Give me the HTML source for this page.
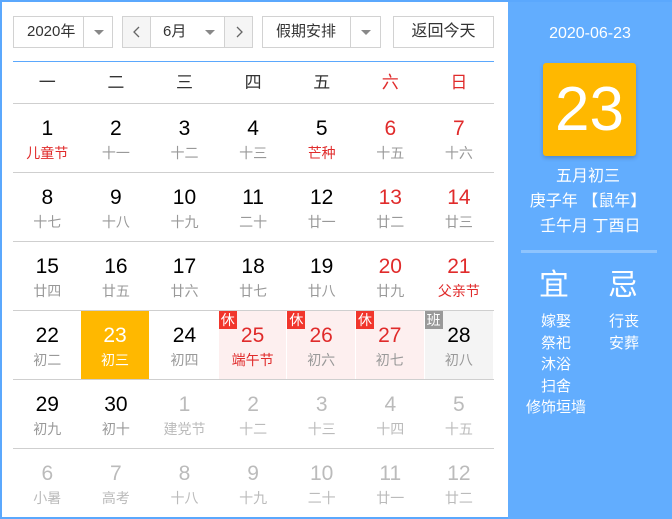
<!DOCTYPE html><html><head><meta charset="utf-8"><style>
*{margin:0;padding:0;box-sizing:border-box}
body{width:672px;height:519px;background:#fff;font-family:"Liberation Sans","Noto Sans CJK SC",sans-serif;position:relative;overflow:hidden}
.frame{position:absolute;left:0;top:0;width:672px;height:519px;border:2px solid #5ba8fd;border-right:none}
.box{position:absolute;top:16px;height:32px;border:1px solid #d2d2d2;font-size:15px;color:#333;line-height:30px}
.tri{position:absolute;width:0;height:0;border-left:5px solid transparent;border-right:5px solid transparent;border-top:5px solid #888;top:13px}
.hline{position:absolute;left:13px;width:481px;height:1px;background:#cfcfcf}
.wk{position:absolute;top:62px;height:41px;line-height:41px;width:68.6px;text-align:center;font-size:17px;color:#333}
.c{position:absolute;width:68.6px;height:68px;text-align:center}
.c .n{position:absolute;top:13px;left:0;right:0;font-size:21px;color:#000;line-height:24px}
.c .l{position:absolute;top:40px;left:0;right:0;font-size:14px;color:#999;line-height:18px}
.red .n{color:#e02b2b}.fes{color:#e02b2b!important}
.g .n,.g .l{color:#bbb}
.hol{background:#fdefef}
.tag{position:absolute;left:0;top:0;width:18px;height:18px;background:#f1362c;color:#fff;font-size:14px;line-height:18px;text-align:center}
.right{position:absolute;left:508px;top:2px;width:164px;height:517px;background:#62adfe;color:#fff;text-align:center}
.arr{position:absolute;top:0;width:28px;height:30px;background:#f5f5f5}
</style></head><body>
<div class="frame"></div>
<div class="box" style="left:13px;width:100px"><span style="position:absolute;left:13px">2020年</span><div style="position:absolute;left:69px;top:0;bottom:0;border-left:1px solid #d2d2d2;width:30px"><div class="tri" style="left:10px"></div></div></div>
<div class="box" style="left:122px;width:131px">
<div class="arr" style="left:0;border-right:1px solid #d2d2d2"><svg width="28" height="30"><path d="M16 10 L11 15 L16 20" fill="none" stroke="#666" stroke-width="1.3"/></svg></div>
<span style="position:absolute;left:40px">6月</span><div class="tri" style="left:82px"></div>
<div class="arr" style="right:0;border-left:1px solid #d2d2d2"><svg width="28" height="30"><path d="M12 10 L17 15 L12 20" fill="none" stroke="#666" stroke-width="1.3"/></svg></div></div>
<div class="box" style="left:262px;width:119px"><span style="position:absolute;left:13px">假期安排</span><div style="position:absolute;left:87px;top:0;bottom:0;border-left:1px solid #d2d2d2;width:31px"><div class="tri" style="left:10px"></div></div></div>
<div class="box" style="left:393px;width:101px;text-align:center;font-size:16px">返回今天</div>
<div class="hline" style="top:61px;background:#5ba8fd"></div>
<div class="wk" style="left:13px">一</div><div class="wk" style="left:81.6px">二</div><div class="wk" style="left:150.2px">三</div><div class="wk" style="left:218.8px">四</div><div class="wk" style="left:287.4px">五</div><div class="wk" style="left:356px;color:#e02b2b">六</div><div class="wk" style="left:424.6px;color:#e02b2b">日</div>
<div class="hline" style="top:103px"></div><div class="hline" style="top:172px"></div><div class="hline" style="top:241px"></div><div class="hline" style="top:310px"></div><div class="hline" style="top:379px"></div><div class="hline" style="top:448px"></div>

<div class="c" style="left:13px;top:104px"><div class="n">1</div><div class="l fes">儿童节</div></div>
<div class="c" style="left:81.6px;top:104px"><div class="n">2</div><div class="l">十一</div></div>
<div class="c" style="left:150.2px;top:104px"><div class="n">3</div><div class="l">十二</div></div>
<div class="c" style="left:218.8px;top:104px"><div class="n">4</div><div class="l">十三</div></div>
<div class="c" style="left:287.4px;top:104px"><div class="n">5</div><div class="l fes">芒种</div></div>
<div class="c red" style="left:356px;top:104px"><div class="n">6</div><div class="l">十五</div></div>
<div class="c red" style="left:424.6px;top:104px"><div class="n">7</div><div class="l">十六</div></div>

<div class="c" style="left:13px;top:173px"><div class="n">8</div><div class="l">十七</div></div>
<div class="c" style="left:81.6px;top:173px"><div class="n">9</div><div class="l">十八</div></div>
<div class="c" style="left:150.2px;top:173px"><div class="n">10</div><div class="l">十九</div></div>
<div class="c" style="left:218.8px;top:173px"><div class="n">11</div><div class="l">二十</div></div>
<div class="c" style="left:287.4px;top:173px"><div class="n">12</div><div class="l">廿一</div></div>
<div class="c red" style="left:356px;top:173px"><div class="n">13</div><div class="l">廿二</div></div>
<div class="c red" style="left:424.6px;top:173px"><div class="n">14</div><div class="l">廿三</div></div>

<div class="c" style="left:13px;top:242px"><div class="n">15</div><div class="l">廿四</div></div>
<div class="c" style="left:81.6px;top:242px"><div class="n">16</div><div class="l">廿五</div></div>
<div class="c" style="left:150.2px;top:242px"><div class="n">17</div><div class="l">廿六</div></div>
<div class="c" style="left:218.8px;top:242px"><div class="n">18</div><div class="l">廿七</div></div>
<div class="c" style="left:287.4px;top:242px"><div class="n">19</div><div class="l">廿八</div></div>
<div class="c red" style="left:356px;top:242px"><div class="n">20</div><div class="l">廿九</div></div>
<div class="c red" style="left:424.6px;top:242px"><div class="n">21</div><div class="l fes">父亲节</div></div>

<div class="c" style="left:13px;top:311px"><div class="n">22</div><div class="l">初二</div></div>
<div class="c" style="left:81px;top:311px;background:#ffb800;width:68px"><div class="n" style="color:#fff">23</div><div class="l" style="color:#fff">初三</div></div>
<div class="c" style="left:150.2px;top:311px"><div class="n">24</div><div class="l">初四</div></div>
<div class="c red hol" style="left:218.8px;top:311px;width:67.6px"><div class="tag">休</div><div class="n">25</div><div class="l fes">端午节</div></div>
<div class="c red hol" style="left:287.4px;top:311px;width:67.6px"><div class="tag">休</div><div class="n">26</div><div class="l">初六</div></div>
<div class="c red hol" style="left:356px;top:311px;width:67.6px"><div class="tag">休</div><div class="n">27</div><div class="l">初七</div></div>
<div class="c" style="left:424.6px;top:311px;background:#f4f4f4"><div class="tag" style="background:#999">班</div><div class="n">28</div><div class="l">初八</div></div>

<div class="c" style="left:13px;top:380px"><div class="n">29</div><div class="l">初九</div></div>
<div class="c" style="left:81.6px;top:380px"><div class="n">30</div><div class="l">初十</div></div>
<div class="c g" style="left:150.2px;top:380px"><div class="n">1</div><div class="l">建党节</div></div>
<div class="c g" style="left:218.8px;top:380px"><div class="n">2</div><div class="l">十二</div></div>
<div class="c g" style="left:287.4px;top:380px"><div class="n">3</div><div class="l">十三</div></div>
<div class="c g" style="left:356px;top:380px"><div class="n">4</div><div class="l">十四</div></div>
<div class="c g" style="left:424.6px;top:380px"><div class="n">5</div><div class="l">十五</div></div>

<div class="c g" style="left:13px;top:449px"><div class="n">6</div><div class="l">小暑</div></div>
<div class="c g" style="left:81.6px;top:449px"><div class="n">7</div><div class="l">高考</div></div>
<div class="c g" style="left:150.2px;top:449px"><div class="n">8</div><div class="l">十八</div></div>
<div class="c g" style="left:218.8px;top:449px"><div class="n">9</div><div class="l">十九</div></div>
<div class="c g" style="left:287.4px;top:449px"><div class="n">10</div><div class="l">二十</div></div>
<div class="c g" style="left:356px;top:449px"><div class="n">11</div><div class="l">廿一</div></div>
<div class="c g" style="left:424.6px;top:449px"><div class="n">12</div><div class="l">廿二</div></div>

<div class="right">
<div style="position:absolute;top:23px;left:0;right:0;font-size:16px">2020-06-23</div>
<div style="position:absolute;left:35px;top:61px;width:93px;height:93px;background:#ffb800;border-radius:3px;box-shadow:0 2px 4px rgba(0,0,0,.2);font-size:62px;line-height:93px">23</div>
<div style="position:absolute;top:162px;left:-4px;right:0;font-size:16px;line-height:25px">五月初三<br>庚子年 【鼠年】<br>&nbsp;壬午月 丁酉日</div>
<div style="position:absolute;top:248px;left:13px;width:136px;height:3px;background:#8ec4fe"></div>
<div style="position:absolute;top:266px;left:31px;font-size:30px;line-height:36px">宜</div>
<div style="position:absolute;top:266px;left:100px;font-size:30px;line-height:36px">忌</div>
<div style="position:absolute;top:309px;left:0;width:96px;font-size:15px;line-height:21.5px">嫁娶<br>祭祀<br>沐浴<br>扫舍<br>修饰垣墙</div>
<div style="position:absolute;top:309px;left:94px;width:44px;font-size:15px;line-height:21.5px;text-align:center">行丧<br>安葬</div>
</div>
</body></html>
